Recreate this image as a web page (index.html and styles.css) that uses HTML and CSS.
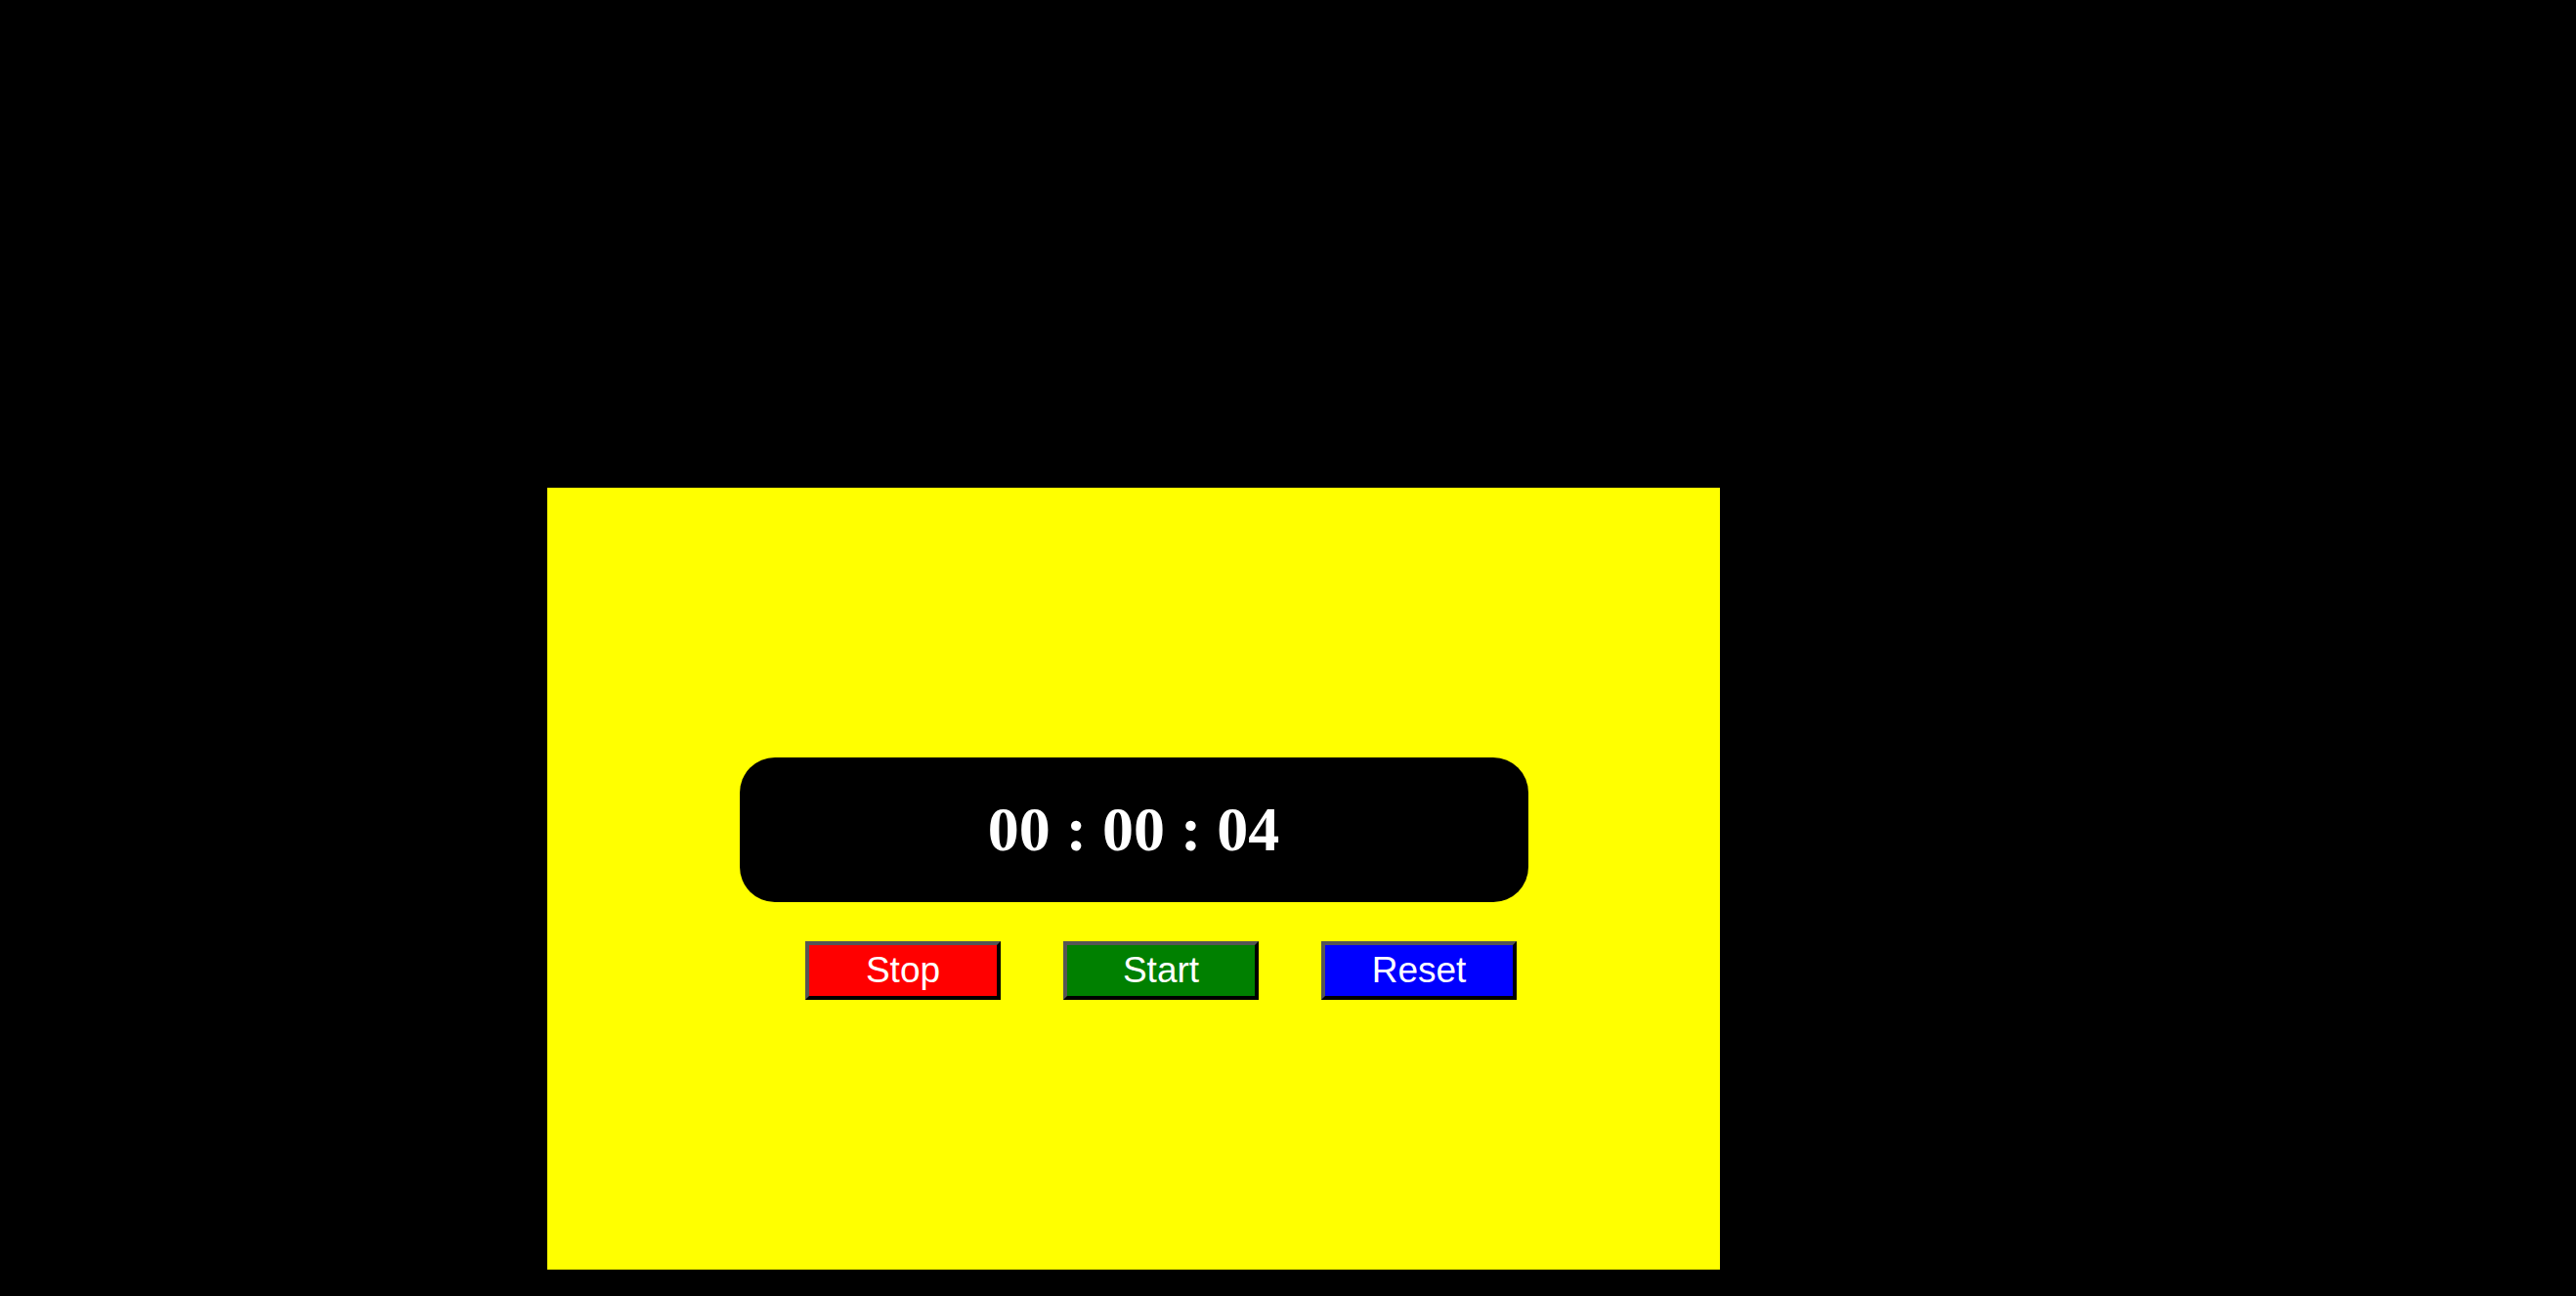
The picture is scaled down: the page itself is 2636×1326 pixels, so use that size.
FILE: index.html
```html
<!DOCTYPE html>
<html>
<head>
<meta charset="utf-8">
<title>Stopwatch</title>
<link rel="stylesheet" href="styles.css">
</head>
<body>
<div class="frame">
  <div class="timer">00 : 00 : 04</div>
  <div class="controls">
    <button class="btn btn-stop">Stop</button>
    <button class="btn btn-start">Start</button>
    <button class="btn btn-reset">Reset</button>
  </div>
</div>
</body>
</html>
```
FILE: styles.css
```css
html, body {
  margin: 0;
  padding: 0;
  background: #000;
}
body {
  padding: 499px 0 0 560px;
}
.frame {
  width: 1200px;
  height: 800px;
  background: #ffff00;
  display: flex;
  flex-direction: column;
  align-items: center;
  justify-content: center;
  gap: 40px;
}
.timer {
  width: 807px;
  height: 148px;
  box-sizing: border-box;
  background: #000;
  border-radius: 36px;
  color: #fff;
  font-family: "Liberation Serif", "Times New Roman", serif;
  font-weight: bold;
  font-size: 64px;
  display: flex;
  align-items: center;
  justify-content: center;
}
.controls {
  display: flex;
  gap: 64px;
  padding-left: 56px;
}
.btn {
  width: 200px;
  height: 60px;
  box-sizing: border-box;
  border-width: 4px;
  border-style: solid;
  border-color: #555 #000 #000 #555;
  color: #fff;
  font-family: "Liberation Sans", Arial, sans-serif;
  font-size: 37px;
  padding: 0;
  display: flex;
  align-items: center;
  justify-content: center;
}
.btn-stop { background: #ff0000; }
.btn-start { background: #008000; }
.btn-reset { background: #0000ff; }
```
